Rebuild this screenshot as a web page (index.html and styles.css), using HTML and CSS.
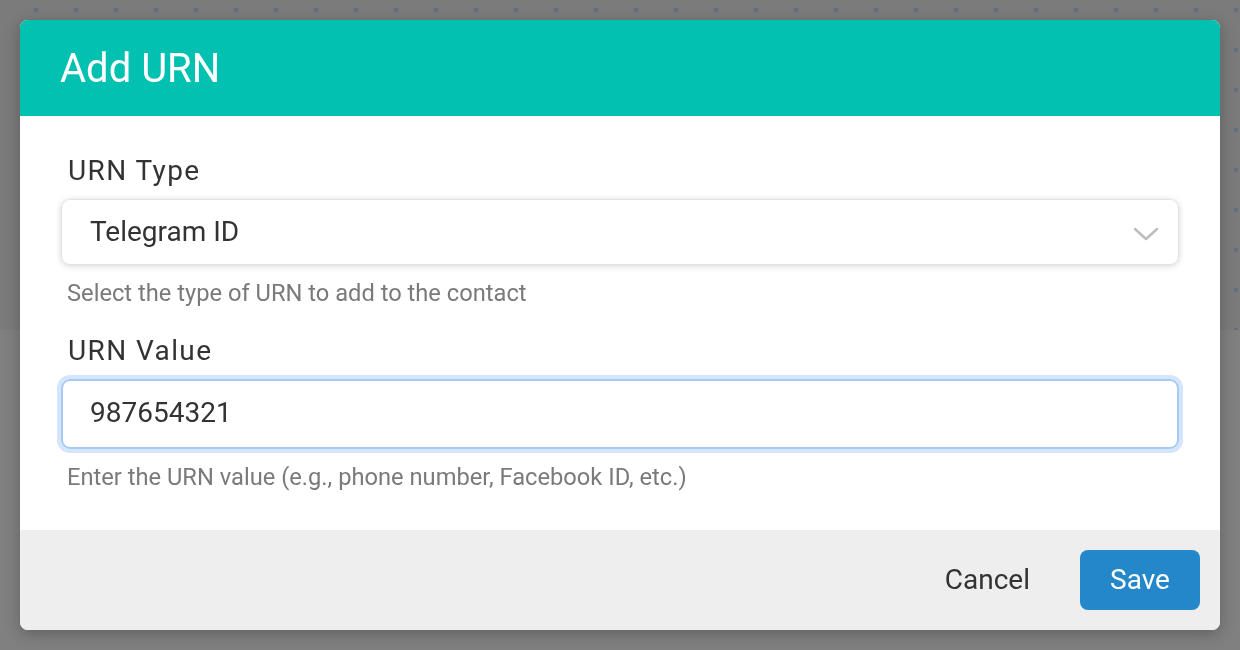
FILE: index.html
```html
<!DOCTYPE html>
<html>
<head>
<meta charset="utf-8">
<link rel="stylesheet" href="styles.css">
</head>
<body>
<div class="page">
  <div class="canvas"></div>
  <div class="below"></div>
</div>
<div class="overlay">
  <div class="modal">
    <div class="modal-header">Add URN</div>
    <div class="modal-body">
      <div class="field">
        <div class="label">URN Type</div>
        <div class="select">
          <span>Telegram ID</span>
          <svg class="chev" width="26" height="16" viewBox="0 0 26 16"><path d="M2 3 L13 13 L24 3" fill="none" stroke="#bdbdbd" stroke-width="2.5" stroke-linecap="round" stroke-linejoin="round"/></svg>
        </div>
        <div class="help">Select the type of URN to add to the contact</div>
      </div>
      <div class="field">
        <div class="label">URN Value</div>
        <div class="input">987654321</div>
        <div class="help">Enter the URN value (e.g., phone number, Facebook ID, etc.)</div>
      </div>
    </div>
    <div class="modal-footer">
      <button class="btn-cancel">Cancel</button>
      <button class="btn-save">Save</button>
    </div>
  </div>
</div>
</body>
</html>
```
FILE: styles.css
```css
html, body {
  margin: 0;
  padding: 0;
  width: 1240px;
  height: 650px;
  overflow: hidden;
  font-family: Roboto, "Liberation Sans", sans-serif;
}
.page {
  display: flex;
  flex-direction: column;
  height: 650px;
}
.canvas {
  height: 330px;
  background-color: #7b7b7b;
  background-image: radial-gradient(circle, #5f6e80 2px, transparent 2.5px);
  background-size: 40px 40px;
  background-position: 16px -10px;
}
.below {
  flex: 1;
  background: #808080;
}
.overlay {
  position: fixed;
  inset: 0;
  padding: 20px;
  display: flex;
  justify-content: center;
}
.modal {
  width: 1200px;
  height: 610px;
  border-radius: 8px;
  overflow: hidden;
  background: #fff;
  box-shadow: 0 4px 16px rgba(0,0,0,0.25);
  display: flex;
  flex-direction: column;
}
.modal-header {
  height: 96px;
  flex-shrink: 0;
  box-sizing: border-box;
  background: #03c1b0;
  color: #fff;
  font-size: 40px;
  padding-left: 40px;
  display: flex;
  align-items: center;
}
.modal-body {
  flex: 1;
  padding: 37px 41px 0 41px;
  display: flex;
  flex-direction: column;
  gap: 26px;
}
.field {
  display: flex;
  flex-direction: column;
}
.label {
  font-size: 28px;
  color: #333;
  letter-spacing: 1.4px;
  padding-left: 7px;
  line-height: 36px;
  margin-bottom: 10px;
}
.select {
  height: 66px;
  box-sizing: border-box;
  border: 1px solid #e2e2e2;
  border-radius: 9px;
  box-shadow: 0 1px 6px rgba(0,0,0,0.17);
  display: flex;
  align-items: center;
  justify-content: space-between;
  padding: 0 19px 2px 28px;
  font-size: 28px;
  color: #333;
}
.chev { margin-top: 6px; }
.input {
  height: 70px;
  box-sizing: border-box;
  border: 2px solid #a9c9f5;
  border-radius: 9px;
  box-shadow: 0 0 0 4px #d5e5fc;
  display: flex;
  align-items: center;
  padding: 0 27px 3px 27px;
  font-size: 28px;
  color: #333;
}
.help {
  font-size: 23.7px;
  line-height: 28px;
  color: #7a7a7a;
  padding-left: 6px;
  margin-top: 14px;
}
.modal-footer {
  height: 100px;
  flex-shrink: 0;
  background: #eeeeee;
  display: flex;
  align-items: center;
  justify-content: flex-end;
  padding-right: 20px;
  gap: 30px;
}
button {
  font-family: Roboto, "Liberation Sans", sans-serif;
  font-size: 28px;
  border: none;
  cursor: pointer;
  padding-bottom: 3px;
}
.btn-cancel {
  background: transparent;
  color: #333;
  padding-left: 20px;
  padding-right: 20px;
  height: 60px;
}
.btn-save {
  background: #2487ca;
  color: #fff;
  width: 120px;
  height: 60px;
  border-radius: 8px;
}
```
